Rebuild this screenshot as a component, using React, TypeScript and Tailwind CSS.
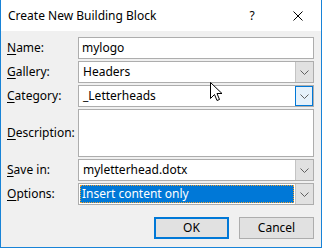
import React from "react";

const font = { fontFamily: '"Noto Sans", "Segoe UI", sans-serif' };

function Chevron() {
  return (
    <svg width="9" height="5" viewBox="0 0 9 5" className="block">
      <path d="M0.5 0.5 L4.5 4.5 L8.5 0.5" fill="none" stroke="#606060" strokeWidth="1" />
    </svg>
  );
}

function DropBtn({ focused }: { focused?: boolean }) {
  return (
    <div
      className={
        "w-[18px] self-stretch flex items-center justify-center " +
        (focused ? "bg-[#e5f1fb] border border-[#0078d7]" : "bg-[#e1e1e1] border-l border-[#c4c4c4]")
      }
    >
      <Chevron />
    </div>
  );
}

function Label({ u, rest }: { u: string; rest: string }) {
  return (
    <div className="w-[71px] shrink-0 text-[12px] text-black">
      <span className="underline underline-offset-2">{u}</span>
      {rest}
    </div>
  );
}

function Combo({ text, focused, selected }: { text: string; focused?: boolean; selected?: boolean }) {
  return (
    <div className="flex h-[22px] w-[236px] border border-[#adadad] bg-white">
      <div className="flex-1 flex items-center px-[1px] py-[1px]">
        {selected ? (
          <div className="flex h-full w-full items-center bg-[#0078d7] text-white text-[12px] pl-[2px] outline outline-1 outline-dotted outline-[#f0a030] -outline-offset-1">
            {text}
          </div>
        ) : (
          <span className="pl-[3px] text-[12px] text-black">{text}</span>
        )}
      </div>
      <DropBtn focused={focused} />
    </div>
  );
}

export default function App() {
  return (
    <div className="w-[322px] h-[248px] flex flex-col bg-[#f0f0f0] border-l border-r border-b border-[#1883d7] relative" style={font}>
      <div className="h-[31px] bg-white flex items-center pl-[7px] shrink-0">
        <span className="text-[12px] text-black flex-1">Create New Building Block</span>
        <span className="text-[12px] text-black w-[46px] text-center">?</span>
        <span className="w-[46px] flex justify-center">
          <svg width="10" height="10" viewBox="0 0 10 10">
            <path d="M0.5 0.5 L9.5 9.5 M9.5 0.5 L0.5 9.5" stroke="#000" strokeWidth="1" />
          </svg>
        </span>
      </div>
      <div className="flex flex-col pl-[6px] pt-[6px] gap-[2px]">
        <div className="flex items-center">
          <Label u="N" rest="ame:" />
          <div className="h-[22px] w-[236px] border border-[#adadad] bg-white flex items-center pl-[3px] text-[12px]">mylogo</div>
        </div>
        <div className="flex items-center">
          <Label u="G" rest="allery:" />
          <Combo text="Headers" />
        </div>
        <div className="flex items-center">
          <Label u="C" rest="ategory:" />
          <Combo text="_Letterheads" focused />
        </div>
        <div className="flex items-center">
          <Label u="D" rest="escription:" />
          <div className="h-[48px] w-[236px] border border-[#adadad] bg-white" />
        </div>
        <div className="flex items-center">
          <Label u="S" rest="ave in:" />
          <Combo text="myletterhead.dotx" />
        </div>
        <div className="flex items-center">
          <Label u="O" rest="ptions:" />
          <Combo text="Insert content only" selected />
        </div>
      </div>
      <div className="flex justify-end gap-[10px] pr-[7px] pt-[12px]">
        <button className="w-[75px] h-[22px] border-2 border-[#0078d7] bg-[#e1e1e1] text-[12px] text-black">OK</button>
        <button className="w-[75px] h-[22px] border border-[#adadad] bg-[#e1e1e1] text-[12px] text-black">Cancel</button>
      </div>
      <svg className="absolute left-[209px] top-[82px]" width="13" height="20" viewBox="0 0 13 20">
        <path d="M0.5 0.5 L0.5 16.5 L4.5 12.5 L7 18.5 L9.5 17.5 L7 11.5 L12 11.5 Z" fill="#fff" stroke="#000" strokeWidth="1" strokeLinejoin="miter" />
      </svg>
    </div>
  );
}
